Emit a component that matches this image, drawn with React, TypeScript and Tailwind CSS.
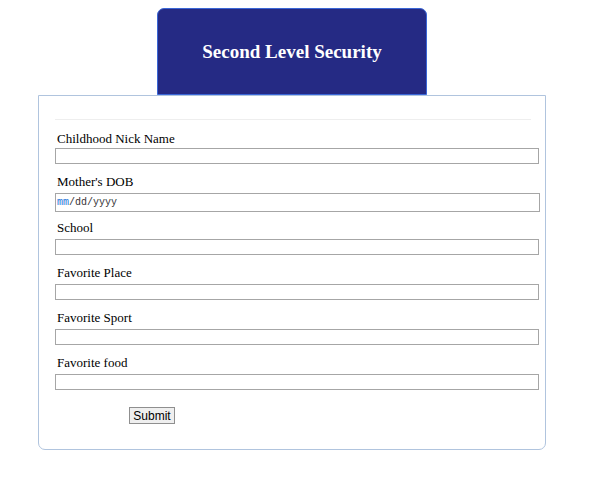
import React from "react";

const serif = { fontFamily: '"Liberation Serif", "Times New Roman", serif' };

function Field({ label, first }: { label: string; first?: boolean }) {
  return (
    <>
      <div className={`${first ? "mt-[11px]" : "mt-[10px]"} ml-[18px] h-[16px] text-[13px] leading-[16px] text-black`}>{label}</div>
      <div className={`${first ? "mt-[1px]" : "mt-[3px]"} ml-4 h-[16px] w-[484px] border border-[#a6a6a6] bg-white`} />
    </>
  );
}

export default function App() {
  return (
    <div className="w-[594px] h-[480px] bg-white pt-2" style={serif}>
      <div className="ml-[38px] w-[508px]">
        <div className="mx-auto flex h-[87px] w-[270px] items-center justify-center rounded-t-[7px] border border-[#3a66d6] bg-[#252a84]">
          <h2 className="text-[19px] font-bold leading-none text-white" style={serif}>
            Second Level Security
          </h2>
        </div>
        <div className="flex h-[355px] flex-col items-start rounded-b-[7px] border border-[#b0c4de] bg-white">
          <div className="mt-[23px] ml-4 h-px w-[476px] shrink-0 bg-[#eeeeee]" />
          <Field label="Childhood Nick Name" first />
          <div className="mt-[10px] ml-[18px] h-[16px] text-[13px] leading-[16px] text-black">Mother's DOB</div>
          <div
            className="mt-[3px] ml-4 flex h-[19px] w-[485px] items-center border border-[#a6a6a6] bg-white pl-[1px] text-[10px] text-[#333]"
            style={{ fontFamily: '"Liberation Mono", "DejaVu Sans Mono", monospace' }}
          >
            <span className="text-[#1a73d9]">mm</span>
            <span>/dd/yyyy</span>
          </div>
          <div className="mt-[8px] ml-[18px] h-[16px] text-[13px] leading-[16px] text-black">School</div>
          <div className="mt-[3px] ml-4 h-[16px] w-[484px] border border-[#a6a6a6] bg-white" />
          <Field label="Favorite Place" />
          <Field label="Favorite Sport" />
          <Field label="Favorite food" />
          <button
            className="mt-[17px] ml-[90px] flex h-[17px] w-[46px] items-center justify-center border border-[#8f8f8f] bg-[#efefef] text-[12px] leading-none text-black"
            style={{ fontFamily: '"Liberation Sans", Arial, sans-serif' }}
          >
            Submit
          </button>
        </div>
      </div>
    </div>
  );
}
